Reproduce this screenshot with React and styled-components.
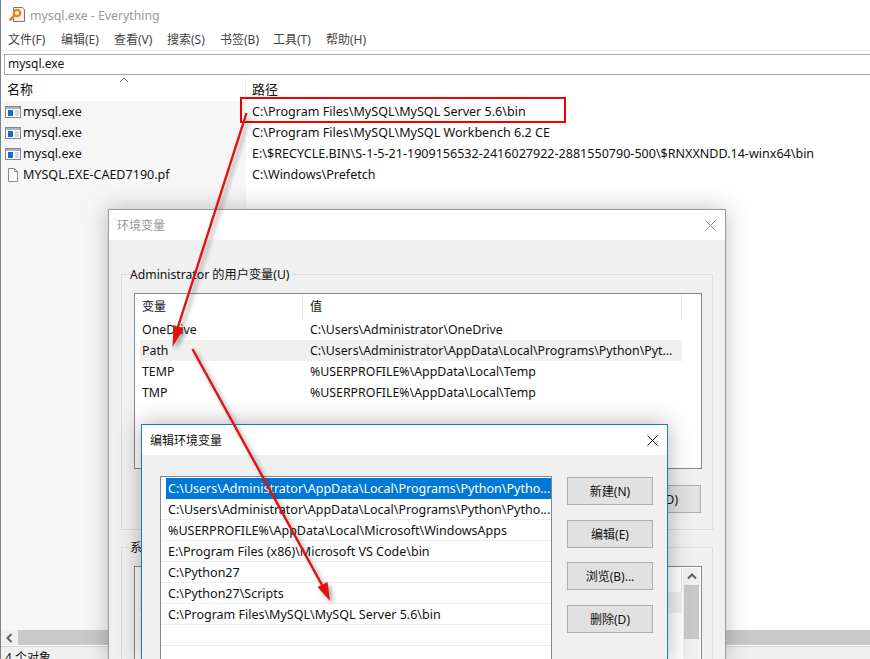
import React from "react"
import styled, { createGlobalStyle } from "styled-components"

const GlobalStyle = createGlobalStyle`
  html, body {
    margin: 0;
    padding: 0;
    background: #fff;
  }
  * {
    box-sizing: border-box;
  }
  body {
    font-family: "Noto Sans", "Noto Sans CJK SC", sans-serif;
    font-size: 12px;
    color: #111;
  }
`

const Screen = styled.div`
  position: relative;
  width: 870px;
  height: 659px;
  overflow: hidden;
  background: #fff;
`

const MainWindow = styled.div`
  display: flex;
  flex-direction: column;
  height: 100%;
  border-left: 1px solid #79828a;
`

const TitleBar = styled.div`
  display: flex;
  align-items: center;
  gap: 4px;
  height: 30px;
  padding: 0 0 0 8px;
  color: #999;
  font-size: 12.3px;
`

const MenuBar = styled.div`
  display: flex;
  gap: 15px;
  height: 19px;
  padding-left: 7px;
  color: #444;
  line-height: 19px;
`

const MenuItem = styled.span`
  width: 38px;
  white-space: nowrap;
`

const SearchRow = styled.div`
  padding: 3px 0 0 3px;
  border-top: 1px solid #f0f0f0;
  margin-top: 1px;
`

const SearchBox = styled.div`
  height: 21px;
  margin-right: -4px;
  padding-left: 3px;
  border: 1px solid #a6a6a6;
  line-height: 17px;
`

const ResultHeader = styled.div`
  display: flex;
  height: 22px;
  margin-top: 4px;
`

const HeaderCell = styled.div`
  position: relative;
  width: ${(p) => p.$width || "auto"};
  flex: ${(p) => (p.$width ? "none" : 1)};
  padding-left: ${(p) => p.$pad}px;
  border-right: ${(p) => (p.$width ? "1px solid #ececec" : "none")};
  font-size: 13px;
  line-height: 20px;
`

const SortCaret = styled.svg`
  position: absolute;
  left: 118px;
  top: -2px;
`

const ResultBody = styled.div`
  display: flex;
  flex: 1;
  min-height: 0;
  font-size: 12.55px;
`

const NameColumn = styled.div`
  width: 245px;
  background: #f6f6f6;
`

const PathColumn = styled.div`
  flex: 1;
  padding-left: 6px;
`

const NameCell = styled.div`
  display: flex;
  align-items: center;
  gap: 2px;
  height: 21px;
  padding-left: 4px;
  white-space: nowrap;
`

const PathCell = styled.div`
  height: 21px;
  line-height: 21px;
  white-space: nowrap;
`

const HScroll = styled.div`
  display: flex;
  height: 15px;
  background: #f0f0f0;
`

const HScrollArrow = styled.div`
  display: flex;
  align-items: center;
  justify-content: center;
  width: 17px;
`

const HScrollThumb = styled.div`
  flex: 1;
  background: #c9c9c9;
`

const StatusBar = styled.div`
  height: 13px;
  margin-top: 1px;
  padding: 3px 0 0 4px;
  overflow: hidden;
  border-top: 1px solid #d5d5d5;
  background: #f0f0f0;
  line-height: 16px;
  white-space: nowrap;
`

const Dialog = styled.div`
  position: absolute;
  left: ${(p) => p.$left}px;
  top: ${(p) => p.$top}px;
  width: ${(p) => p.$width}px;
  height: ${(p) => 659 - p.$top + 4}px;
  display: flex;
  flex-direction: column;
  border: 1px solid ${(p) => (p.$active ? "#0f7fd6" : "#9b9b9b")};
  background: #f0f0f0;
  box-shadow: 0 0 22px rgba(0, 0, 0, ${(p) => (p.$active ? 0.3 : 0.25)});
`

const DialogTitle = styled.div`
  display: flex;
  align-items: center;
  justify-content: space-between;
  flex: none;
  height: 30px;
  padding: 0 9px 0 8px;
  background: #fff;
  color: ${(p) => (p.$active ? "#111" : "#999")};
  font-size: 12px;
`

const CloseIcon = ({ color }) => (
  <svg width="11" height="11" viewBox="0 0 11 11">
    <path d="M0.5 0.5l10 10M10.5 0.5l-10 10" stroke={color} strokeWidth="1" fill="none" />
  </svg>
)

const DialogBody = styled.div`
  padding: 26px 12px 0;
`

const Group = styled.fieldset`
  min-width: 0;
  margin: 0 0 ${(p) => p.$gap || 0}px;
  padding: 11px 10px ${(p) => p.$bottom || 0}px 12px;
  border: 1px solid #dcdcdc;
`

const GroupLabel = styled.legend`
  margin-left: -4px;
  padding: 1px 2px 0 0;
  height: 16px;
  font-size: 12.2px;
  line-height: 16px;
`

const VarList = styled.div`
  position: relative;
  height: ${(p) => p.$height}px;
  border: 1px solid #828790;
  background: #fff;
  padding-left: 5px;
  overflow: hidden;
`

const VarHeader = styled.div`
  display: grid;
  grid-template-columns: 163px 379px;
  height: 25px;
  padding-top: 1px;
`

const VarHeaderCell = styled.div`
  padding-left: ${(p) => p.$pad}px;
  border-right: 1px solid #e5e5e5;
  line-height: 24px;
`

const VarRow = styled.div`
  display: grid;
  grid-template-columns: 168px 1fr;
  width: 542px;
  height: 21px;
  padding-left: 2px;
  font-size: 12.35px;
  line-height: 21px;
  white-space: nowrap;
  background: ${(p) => (p.$hover ? "#f0f0f0" : "transparent")};
`

const VScroll = styled.div`
  position: absolute;
  right: 1px;
  top: 1px;
  bottom: 0;
  width: 17px;
  display: flex;
  flex-direction: column;
  align-items: center;
  background: #f0f0f0;
`

const VScrollArrow = styled.div`
  display: flex;
  align-items: center;
  justify-content: center;
  flex: none;
  height: 17px;
`

const VScrollThumb = styled.div`
  width: 15px;
  height: 54px;
  background: #c9c9c9;
`

const ButtonRow = styled.div`
  display: flex;
  justify-content: flex-end;
  gap: 8px;
  margin: 16px 1px 0 0;
`

const Button = styled.div`
  display: flex;
  align-items: center;
  justify-content: center;
  width: 86px;
  height: 28px;
  border: 1px solid #adadad;
  background: #e1e1e1;
  white-space: nowrap;
`

const EditBody = styled.div`
  display: flex;
  gap: 15px;
  padding: 21px 0 0 18px;
`

const PathList = styled.div`
  width: 392px;
  height: 220px;
  padding-top: 1px;
  border: 1px solid #828790;
  background: #fff;
`

const PathRow = styled.div`
  height: 21px;
  margin: ${(p) => (p.$selected ? "0 0 0 5px" : "0")};
  padding-left: ${(p) => (p.$selected ? 2 : 7)}px;
  border-bottom: 1px solid ${(p) => (p.$selected ? "#0078d7" : "#ececec")};
  background: ${(p) => (p.$selected ? "#0078d7" : "transparent")};
  color: ${(p) => (p.$selected ? "#fff" : "#111")};
  font-size: 12.5px;
  line-height: 22px;
  white-space: nowrap;
  overflow: hidden;
`

const ButtonColumn = styled.div`
  display: grid;
  gap: 14.67px;
  align-content: start;
  padding-top: 1px;
`

const Highlight = styled.div`
  position: absolute;
  left: 240px;
  top: 97px;
  width: 326px;
  height: 26px;
  border: 2px solid #f00000;
`

const Arrows = styled.svg`
  position: absolute;
  left: 0;
  top: 0;
  pointer-events: none;
  filter: drop-shadow(3px 3px 2px rgba(0, 0, 0, 0.35));
`

const ExeIcon = () => (
  <svg width="16" height="14" viewBox="0 0 16 14">
    <rect x="0.5" y="1.5" width="15" height="11" fill="#fff" stroke="#7f8a96" />
    <rect x="1" y="2" width="14" height="2" fill="#aab2bb" />
    <rect x="3" y="5" width="5" height="6" fill="#0f6fd0" />
    <path d="M10 6h4M10 8h4M10 10h4" stroke="#a8b4c4" />
  </svg>
)

const FileIcon = () => (
  <svg width="16" height="16" viewBox="0 0 16 16">
    <path d="M3.5 1.5h6l3 3v10h-9z" fill="#fff" stroke="#8a8a8a" />
    <path d="M9.5 1.5v3h3" fill="none" stroke="#8a8a8a" />
  </svg>
)

const AppIcon = () => (
  <svg width="17" height="18" viewBox="0 0 17 18">
    <path d="M4.5 1.5h9l2 2v12h-11z" fill="#f4f1ea" stroke="#777" />
    <circle cx="8" cy="7" r="3.2" fill="none" stroke="#e8821e" strokeWidth="2.2" />
    <path d="M5.6 9.4L1.5 13.5" stroke="#e8821e" strokeWidth="2.6" strokeLinecap="round" />
  </svg>
)

const menus = ["文件(F)", "编辑(E)", "查看(V)", "搜索(S)", "书签(B)", "工具(T)", "帮助(H)"]

const results = [
  { name: "mysql.exe", path: "C:\\Program Files\\MySQL\\MySQL Server 5.6\\bin", exe: true },
  { name: "mysql.exe", path: "C:\\Program Files\\MySQL\\MySQL Workbench 6.2 CE", exe: true },
  {
    name: "mysql.exe",
    path: "E:\\$RECYCLE.BIN\\S-1-5-21-1909156532-2416027922-2881550790-500\\$RNXXNDD.14-winx64\\bin",
    exe: true,
  },
  { name: "MYSQL.EXE-CAED7190.pf", path: "C:\\Windows\\Prefetch" },
]

const userVars = [
  ["OneDrive", "C:\\Users\\Administrator\\OneDrive"],
  ["Path", "C:\\Users\\Administrator\\AppData\\Local\\Programs\\Python\\Pyt..."],
  ["TEMP", "%USERPROFILE%\\AppData\\Local\\Temp"],
  ["TMP", "%USERPROFILE%\\AppData\\Local\\Temp"],
]

const pathEntries = [
  "C:\\Users\\Administrator\\AppData\\Local\\Programs\\Python\\Pytho...",
  "C:\\Users\\Administrator\\AppData\\Local\\Programs\\Python\\Pytho...",
  "%USERPROFILE%\\AppData\\Local\\Microsoft\\WindowsApps",
  "E:\\Program Files (x86)\\Microsoft VS Code\\bin",
  "C:\\Python27",
  "C:\\Python27\\Scripts",
  "C:\\Program Files\\MySQL\\MySQL Server 5.6\\bin",
  "",
  "",
]

const App = () => (
  <Screen>
    <GlobalStyle />
    <MainWindow>
      <TitleBar>
        <AppIcon />
        mysql.exe - Everything
      </TitleBar>
      <MenuBar>
        {menus.map((m) => (
          <MenuItem key={m}>{m}</MenuItem>
        ))}
      </MenuBar>
      <SearchRow>
        <SearchBox>mysql.exe</SearchBox>
      </SearchRow>
      <ResultHeader>
        <HeaderCell $width="245px" $pad={6}>
          名称
          <SortCaret width="10" height="6" viewBox="0 0 10 6">
            <path d="M1 5l4-4 4 4" fill="none" stroke="#777" />
          </SortCaret>
        </HeaderCell>
        <HeaderCell $pad={6}>路径</HeaderCell>
      </ResultHeader>
      <ResultBody>
        <NameColumn>
          {results.map((r) => (
            <NameCell key={r.path}>
              {r.exe ? <ExeIcon /> : <FileIcon />}
              {r.name}
            </NameCell>
          ))}
        </NameColumn>
        <PathColumn>
          {results.map((r) => (
            <PathCell key={r.path}>{r.path}</PathCell>
          ))}
        </PathColumn>
      </ResultBody>
      <HScroll>
        <HScrollArrow>
          <svg width="7" height="10" viewBox="0 0 7 10">
            <path d="M5.5 1L1.5 5l4 4" fill="none" stroke="#606060" strokeWidth="2" />
          </svg>
        </HScrollArrow>
        <HScrollThumb />
      </HScroll>
      <StatusBar>4 个对象</StatusBar>
    </MainWindow>

    <Dialog $left={108} $top={209} $width={618}>
      <DialogTitle>
        环境变量
        <CloseIcon color="#8a8a8a" />
      </DialogTitle>
      <DialogBody>
        <Group $gap={9} $bottom={16}>
          <GroupLabel>Administrator 的用户变量(U)</GroupLabel>
          <VarList $height={176}>
            <VarHeader>
              <VarHeaderCell $pad={2}>变量</VarHeaderCell>
              <VarHeaderCell $pad={7}>值</VarHeaderCell>
            </VarHeader>
            {userVars.map(([name, value]) => (
              <VarRow key={name} $hover={name === "Path"}>
                <span>{name}</span>
                <span>{value}</span>
              </VarRow>
            ))}
          </VarList>
          <ButtonRow>
            <Button>新建(N)...</Button>
            <Button>编辑(E)...</Button>
            <Button>删除(D)</Button>
          </ButtonRow>
        </Group>
        <Group>
          <GroupLabel>系统变量(S)</GroupLabel>
          <VarList $height={120}>
            <VarHeader>
              <VarHeaderCell $pad={2}>变量</VarHeaderCell>
              <VarHeaderCell $pad={7}>值</VarHeaderCell>
            </VarHeader>
            <VarRow $hover>
              <span>ComSpec</span>
              <span>C:\Windows\system32\cmd.exe</span>
            </VarRow>
            <VScroll>
              <VScrollArrow>
                <svg width="10" height="7" viewBox="0 0 10 7">
                  <path d="M1 5.5l4-4 4 4" fill="none" stroke="#606060" strokeWidth="2" />
                </svg>
              </VScrollArrow>
              <VScrollThumb />
            </VScroll>
          </VarList>
        </Group>
      </DialogBody>
    </Dialog>

    <Dialog $left={141} $top={424} $width={527} $active>
      <DialogTitle $active>
        编辑环境变量
        <CloseIcon color="#111" />
      </DialogTitle>
      <EditBody>
        <PathList>
          {pathEntries.map((p, i) => (
            <PathRow key={i} $selected={i === 0}>
              {p}
            </PathRow>
          ))}
        </PathList>
        <ButtonColumn>
          <Button>新建(N)</Button>
          <Button>编辑(E)</Button>
          <Button>浏览(B)...</Button>
          <Button>删除(D)</Button>
        </ButtonColumn>
      </EditBody>
    </Dialog>

    <Highlight />
    <Arrows width="870" height="659" viewBox="0 0 870 659">
      <path d="M246.5 113L177 330" stroke="#e01212" strokeWidth="2.4" fill="none" />
      <path d="M172.5 347L173.5 325L183.5 329z" fill="#e01212" />
      <path d="M192.5 349L322 585" stroke="#e01212" strokeWidth="2.4" fill="none" />
      <path d="M330 601L317.5 587L327.5 582z" fill="#e01212" />
    </Arrows>
  </Screen>
)

export default App
